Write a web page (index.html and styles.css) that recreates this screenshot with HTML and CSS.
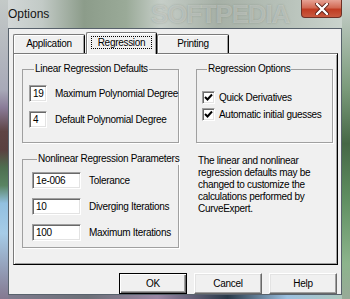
FILE: index.html
```html
<!DOCTYPE html>
<html lang="en">
<head>
    <meta charset="UTF-8">
    <title>Options</title>
    <link rel="stylesheet" href="styles.css">
</head>
<body>
    <div class="window">
        <div class="titlebar">
            <span class="title">Options</span>
            <span class="watermark">SOFTPEDIA</span>
            <span class="close">
                <svg width="14" height="12" viewBox="0 0 14 12">
                    <path d="M2 1 L12 11 M12 1 L2 11" stroke="#5a2018" stroke-width="4" stroke-linecap="round"/>
                    <path d="M2 1 L12 11 M12 1 L2 11" stroke="#fff" stroke-width="2.4" stroke-linecap="round"/>
                </svg>
            </span>
        </div>
        <div class="client">
            <div class="tabs">
                <div class="tab">Application</div>
                <div class="tab active"><span class="focus">Regression</span></div>
                <div class="tab">Printing</div>
            </div>
            <div class="panel">
                <fieldset class="group linear">
                    <legend>Linear Regression Defaults</legend>
                    <div class="field"><span class="edit small">19</span><span>Maximum Polynomial Degree</span></div>
                    <div class="field"><span class="edit small">4</span><span>Default Polynomial Degree</span></div>
                </fieldset>
                <fieldset class="group options">
                    <legend>Regression Options</legend>
                    <div class="check"><span class="box"><svg width="9" height="9" viewBox="0 0 9 9"><path d="M1 4 L3.5 6.5 L8 1.5" stroke="#000" stroke-width="2" fill="none"/></svg></span><span>Quick Derivatives</span></div>
                    <div class="check"><span class="box"><svg width="9" height="9" viewBox="0 0 9 9"><path d="M1 4 L3.5 6.5 L8 1.5" stroke="#000" stroke-width="2" fill="none"/></svg></span><span>Automatic initial guesses</span></div>
                </fieldset>
                <fieldset class="group nonlinear">
                    <legend>Nonlinear Regression Parameters</legend>
                    <div class="field"><span class="edit wide">1e-006</span><span>Tolerance</span></div>
                    <div class="field"><span class="edit wide">10</span><span>Diverging Iterations</span></div>
                    <div class="field"><span class="edit wide">100</span><span>Maximum Iterations</span></div>
                </fieldset>
                <p class="note">The linear and nonlinear<br>regression defaults may be<br>changed to customize the<br>calculations performed by<br>CurveExpert.</p>
            </div>
            <div class="buttons">
                <button class="btn default">OK</button>
                <button class="btn">Cancel</button>
                <button class="btn">Help</button>
            </div>
        </div>
    </div>
</body>
</html>
```

FILE: styles.css
```css
body {
    margin: 0;
    font-family: "Liberation Sans", Arial, sans-serif;
    font-size: 10px;
    letter-spacing: -0.3px;
    color: #000;
}

.window {
    width: 350px;
    height: 299px;
    display: flex;
    flex-direction: column;
    background:
        linear-gradient(to bottom, #c4cac8 0, #a8aab8 30%, #8a7c98 36%, #5e4444 44%, #5a4040 50%, #4e6e50 56%, #5a8462 62%, #92c0e0 68%, #a6cce8 78%, #847890 100%) left top / 8px 100% no-repeat,
        linear-gradient(to bottom, #c8d0cc 0, #7a9a7a 30%, #466846 48%, #5e8e60 66%, #8cb48c 88%, #98aa98 100%) right top / 8px 100% no-repeat,
        linear-gradient(to right, #807c90, #6c7078 25%, #9a86a4 45%, #283848 65%, #9cc0e0 82%, #b0c8b8 100%) left bottom / 100% 8px no-repeat,
        linear-gradient(to right, #d6dadb 0, #c2cac6 12%, #8c9c8a 24%, #9aaa98 36%, #c6cec8 46%, #a6b0a6 62%, #b8c2ba 82%, #ccd6d0 100%);
}

.titlebar {
    height: 28px;
    display: flex;
    align-items: flex-start;
}

.title {
    font-size: 12px;
    letter-spacing: 0;
    color: #141414;
    padding: 7px 0 0 8px;
    line-height: 14px;
}

.watermark {
    margin-left: auto;
    margin-right: 12px;
    margin-top: 2px;
    font-size: 26px;
    font-weight: bold;
    letter-spacing: -1.2px;
    line-height: 25px;
    color: rgba(255, 255, 255, 0.3);
    text-shadow: 0 0 2px rgba(90, 100, 90, 0.35);
}

.close {
    width: 39px;
    height: 17px;
    margin-right: 8px;
    flex-shrink: 0;
    display: flex;
    align-items: center;
    justify-content: center;
    background: linear-gradient(to bottom, #e6a294 0, #d26a54 45%, #c03c22 55%, #c85a40 100%);
    border: 1px solid #6e3026;
    border-top: none;
    border-radius: 0 0 4px 4px;
}

.client {
    margin: 0 8px;
    height: 262px;
    background: #f0f0f0;
    border: 1px solid #58626c;
    padding: 3px 3px 0 4px;
    display: flex;
    flex-direction: column;
}

.tabs {
    display: flex;
    align-items: flex-end;
    height: 21px;
}

.tab {
    height: 18px;
    line-height: 18px;
    text-align: center;
    background: #f0f0f0;
    border: 1px solid #7a7a7a;
    border-right-color: #000;
    border-bottom: none;
    border-radius: 2px 2px 0 0;
    box-shadow: inset 1px 1px #fff, inset -1px 0 #a0a0a0;
    width: 70px;
}

.tab:first-child {
    margin-right: 1px;
}

.tab.active {
    height: 21px;
    line-height: 20px;
    width: 69px;
    margin-bottom: -1px;
    position: relative;
    z-index: 1;
}

.focus {
    border: 1px dotted #000;
    padding: 0 6px;
}

.panel {
    height: 203px;
    background: #f0f0f0;
    border: 1px solid #7a7a7a;
    border-right-color: #000;
    border-bottom-color: #000;
    box-shadow: inset 1px 1px #fff, inset -1px -1px #a0a0a0;
    display: grid;
    grid-template-columns: 157px 137px;
    grid-template-rows: 80px 95px;
    column-gap: 17px;
    row-gap: 10px;
    padding: 9px 0 0 8px;
    align-content: start;
}

.group {
    margin: 0;
    border: 1px solid #a0a0a0;
    box-shadow: 1px 1px 0 #fff;
    padding: 0;
    min-width: 0;
}

.group legend {
    margin-left: 5px;
    padding: 0 1px;
    line-height: 12px;
    white-space: nowrap;
}

.linear {
    padding: 10px 0 0 6px;
    display: flex;
    flex-direction: column;
    gap: 9px;
}

.nonlinear {
    padding: 7px 0 0 9px;
    display: flex;
    flex-direction: column;
    gap: 9px;
}

.options {
    padding: 16px 0 0 5px;
    display: flex;
    flex-direction: column;
    gap: 4px;
}

.field {
    display: flex;
    align-items: center;
    gap: 8px;
    height: 17px;
    white-space: nowrap;
}

.edit {
    height: 17px;
    box-sizing: border-box;
    flex-shrink: 0;
    background: #fff;
    border: 1px solid;
    border-color: #a0a0a0 #fff #fff #a0a0a0;
    box-shadow: inset 1px 1px #696969, inset -1px -1px #e3e3e3;
    padding: 0 3px;
    line-height: 15px;
}

.small {
    width: 18px;
}

.wide {
    width: 49px;
}

.check {
    display: flex;
    align-items: center;
    gap: 4px;
    height: 13px;
    white-space: nowrap;
}

.box {
    width: 13px;
    height: 13px;
    box-sizing: border-box;
    flex-shrink: 0;
    background: #fff;
    border: 1px solid;
    border-color: #a0a0a0 #fff #fff #a0a0a0;
    box-shadow: inset 1px 1px #696969, inset -1px -1px #e3e3e3;
    display: flex;
    align-items: center;
    justify-content: center;
}

.note {
    margin: 2px 0 0 2px;
    line-height: 12px;
}

.buttons {
    display: flex;
    justify-content: flex-end;
    gap: 7px;
    margin: 8px 1px 0 0;
}

.btn {
    width: 68px;
    height: 21px;
    font-family: "Liberation Sans", Arial, sans-serif;
    font-size: 10px;
    letter-spacing: -0.3px;
    background: #f0f0f0;
    border: 1px solid;
    border-color: #fff #696969 #696969 #fff;
    box-shadow: inset -1px -1px #a0a0a0, inset 1px 1px #e3e3e3;
    padding: 0;
    color: #000;
}

.btn.default {
    border-color: #000;
    box-shadow: inset 1px 1px #fff, inset -1px -1px #696969, inset -2px -2px #a0a0a0;
}
```
